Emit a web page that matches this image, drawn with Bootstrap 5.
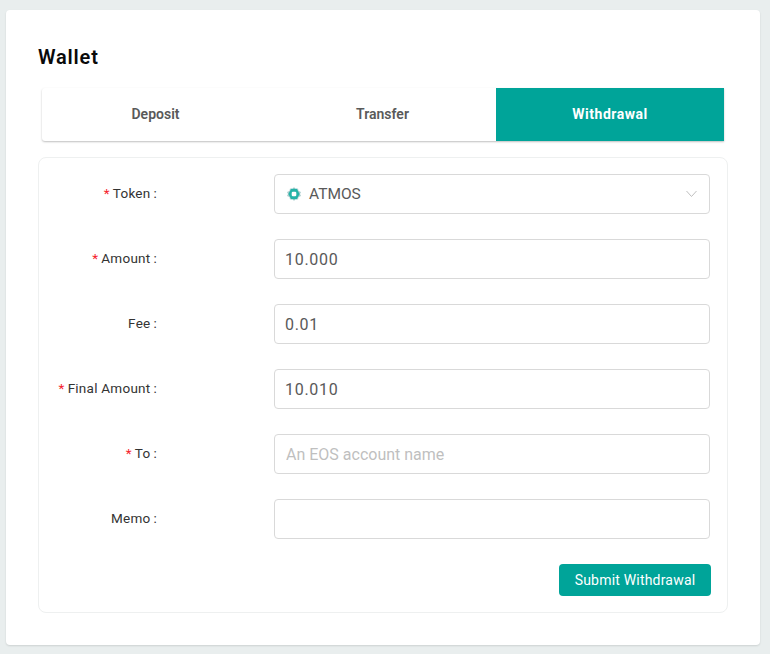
<!DOCTYPE html>
<html lang="en">
<head>
<meta charset="utf-8">
<title>Wallet</title>
<link href="https://cdn.jsdelivr.net/npm/bootstrap@5.3.0/dist/css/bootstrap.min.css" rel="stylesheet">
<style>
html,body{height:100%}
body{background:#e9eeee;font-family:Roboto,"Liberation Sans",sans-serif;color:#333;overflow:hidden}
.wl-page{padding:10px 10px 9px 6px;height:654px}
.wl-card{background:#fff;border-radius:4px;height:635px;padding:32px 32px 0;box-shadow:0 1px 2px rgba(0,0,0,.12)}
.wl-title{font-size:20px;line-height:30px;font-weight:600;color:#0a0a0a;margin:0 0 16px;letter-spacing:.8px}
.wl-tabs{margin:0 4px;width:682px;height:53px;box-shadow:0 1px 2px rgba(0,0,0,.25);border-radius:3px 0 0 3px}
.wl-tab{width:227px;display:flex;align-items:center;justify-content:center;font-size:14px;font-weight:600;color:#595959;text-decoration:none}
.wl-tab.wl-on{width:228px;background:#00a499;color:#fff;font-weight:700;letter-spacing:.5px}
.wl-panel{margin-top:16px;width:690px;height:456px;border:1px solid #eef0f0;border-radius:8px;padding:16px 17px 0 0}
.wl-row{height:40px;margin-bottom:25px;display:flex;align-items:center}
.wl-label{width:118px;flex:none;text-align:right;font-size:13.5px;line-height:20px;color:#333;margin:-2px 0 0;white-space:nowrap;letter-spacing:.25px}
.wl-star{color:#f5222d;margin-right:3px}
.wl-colon{margin-left:3px}
.wl-field{margin-left:117px;width:436px;flex:none}
.wl-input.form-control{height:40px;border:1px solid #d9d9d9;border-radius:4px;padding:0 11px;font-size:16px;color:#595959;box-shadow:none}
.wl-input.form-control::placeholder{color:#bfbfbf}
.wl-num.form-control{padding-left:10px;letter-spacing:.7px}
.wl-select{height:40px;border:1px solid #d9d9d9;border-radius:4px;padding:0 12px 0 12px;font-size:15.5px;color:#595959}
.wl-select-text{padding-top:2px}
.wl-token{margin-right:8px;display:block}
.wl-submit.btn{background:#00a499;border:0;color:#fff;width:152px;height:32px;padding:0;font-size:14px;font-weight:400;letter-spacing:.2px;border-radius:4px;margin-left:520px;display:block;margin-top:0}
</style>
</head>
<body>
<div class="wl-page">
  <div class="wl-card">
    <h1 class="wl-title">Wallet</h1>
    <nav class="wl-tabs d-flex">
      <a class="wl-tab" href="#">Deposit</a>
      <a class="wl-tab" href="#">Transfer</a>
      <a class="wl-tab wl-on" href="#">Withdrawal</a>
    </nav>
    <form class="wl-panel">
      <div class="wl-row">
        <label class="wl-label"><span class="wl-star">*</span>Token<span class="wl-colon">:</span></label>
        <div class="wl-field">
          <div class="wl-select d-flex align-items-center">
            <svg class="wl-token" width="14" height="14" viewBox="0 0 14 14"><polygon points="7,0 8.500,2 11,1.500 11.500,4 14,5 13,7 14,9 11.500,10 11,12.500 8.500,12 7,14 5.500,12 3,12.500 2.500,10 0,9 1,7 0,5 2.500,4 3,1.500 5.500,2" fill="#6fa8aa" opacity=".6"/><polygon points="4.200,1.800 9.800,1.800 12.600,7 9.800,12.200 4.200,12.200 1.400,7" fill="#25b3a8"/><rect x="4.700" y="4.700" width="4.600" height="4.600" rx="1.200" fill="#fff"/></svg>
            <span class="wl-select-text">ATMOS</span>
            <svg class="ms-auto" width="11" height="8" viewBox="0 0 11 8"><path d="M.5 1l5 5.500L10.500 1" fill="none" stroke="#bfbfbf" stroke-width="1"/></svg>
          </div>
        </div>
      </div>
      <div class="wl-row">
        <label class="wl-label"><span class="wl-star">*</span>Amount<span class="wl-colon">:</span></label>
        <div class="wl-field"><input class="form-control wl-input wl-num" value="10.000"></div>
      </div>
      <div class="wl-row">
        <label class="wl-label">Fee<span class="wl-colon">:</span></label>
        <div class="wl-field"><input class="form-control wl-input wl-num" value="0.01"></div>
      </div>
      <div class="wl-row">
        <label class="wl-label"><span class="wl-star">*</span>Final Amount<span class="wl-colon">:</span></label>
        <div class="wl-field"><input class="form-control wl-input wl-num" value="10.010"></div>
      </div>
      <div class="wl-row">
        <label class="wl-label"><span class="wl-star">*</span>To<span class="wl-colon">:</span></label>
        <div class="wl-field"><input class="form-control wl-input" placeholder="An EOS account name"></div>
      </div>
      <div class="wl-row">
        <label class="wl-label">Memo<span class="wl-colon">:</span></label>
        <div class="wl-field"><input class="form-control wl-input"></div>
      </div>
      <button type="button" class="btn wl-submit">Submit Withdrawal</button>
    </form>
  </div>
</div>
<script src="https://cdn.jsdelivr.net/npm/bootstrap@5.3.0/dist/js/bootstrap.bundle.min.js"></script>
</body>
</html>
